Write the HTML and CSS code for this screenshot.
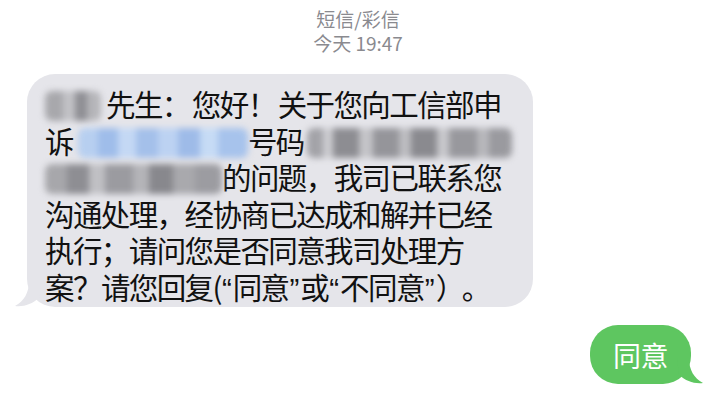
FILE: index.html
```html
<!DOCTYPE html>
<html lang="zh-CN">
<head>
<meta charset="utf-8">
<title>短信/彩信</title>
<link rel="stylesheet" href="styles.css">
</head>
<body>
<div class="screen">
  <header class="meta">
    <div class="meta-line">短信/彩信</div>
    <div class="meta-line">今天 19:47</div>
  </header>

  <div class="row row-in">
    <div class="bubble bubble-in">
      <svg class="tail tail-in" width="26" height="26" viewBox="0 0 26 26"><path d="M14 0 C14 12 9 20 0 25 C9 26 17 23 24 17 L26 0 Z" fill="#e5e5ea"/></svg>
      <p class="msg"><span class="mask mask-name"></span>先生<span class="pw pw-wide">：</span>您好<span class="pw pw-wide">！</span>关于您向工信部申<br>诉<span class="mask mask-link"></span>号码<span class="mask mask-num"></span><br><span class="mask mask-long"></span>的问题<span class="pw">，</span>我司已联系您<br>沟通处理<span class="pw">，</span>经协商已达成和解并已经<br>执行<span class="pw">；</span>请问您是否同意我司处理方<br>案<span class="pw">？</span>请您回复(<span class="q">“</span>同意<span class="q">”</span>或<span class="q">“</span>不同意<span class="q">”</span><span class="pw pw-paren">）</span><span class="pw">。</span></p>
    </div>
  </div>

  <div class="row row-out">
    <div class="bubble bubble-out">
      <svg class="tail tail-out" width="26" height="26" viewBox="0 0 26 26"><path d="M12 0 C12 12 17 20 26 25 C17 26 9 23 2 17 L0 0 Z" fill="#5ec660"/></svg>
      <span class="reply">同意</span>
    </div>
  </div>
</div>
</body>
</html>
```

FILE: styles.css
```css
html, body {
  margin: 0;
  padding: 0;
  background: #ffffff;
}

.screen {
  width: 716px;
  height: 409px;
  overflow: hidden;
  display: flex;
  flex-direction: column;
  font-family: "Noto Sans CJK SC", "Noto Sans", sans-serif;
}

.meta {
  padding-top: 7px;
  display: flex;
  flex-direction: column;
  align-items: center;
  color: #8a8a8f;
  font-size: 19px;
  line-height: 24px;
}

.row {
  display: flex;
}

.row-in {
  padding-left: 27px;
  margin-top: 19px;
}

.row-out {
  justify-content: flex-end;
  padding-right: 25px;
  margin-top: 18px;
}

.bubble {
  position: relative;
}

.bubble-in {
  width: 506px;
  height: 233px;
  box-sizing: border-box;
  background: #e5e5ea;
  border-radius: 28px;
  padding: 11px 0 0 18px;
}

.tail {
  position: absolute;
  bottom: 0;
}

.tail-in {
  left: -12px;
}

.tail-out {
  right: -12px;
}

.msg {
  margin: 0;
  font-size: 29.5px;
  line-height: 36.5px;
  color: #111111;
  white-space: nowrap;
  letter-spacing: -1.6px;
}

.pw {
  display: inline-block;
  width: 28px;
  letter-spacing: 0;
  text-align: left;
}

.pw-wide {
  width: 30px;
}

.pw-paren {
  width: 26px;
  text-align: center;
}

.q {
  font-family: "Liberation Sans", "Noto Sans", sans-serif;
  letter-spacing: 0;
  margin: 0 1px;
}

.mask {
  display: inline-block;
  vertical-align: -5px;
  height: 30px;
  border-radius: 7px;
  filter: blur(3px);
  letter-spacing: 0;
}

.mask-name {
  width: 56px;
  margin-right: 5px;
  background:
    linear-gradient(90deg, #a8a8ac 0 18px, #c2c2c6 18px 30px, #8f8f94 30px 42px, #b5b5b9 42px 56px);
}

.mask-link {
  width: 170px;
  margin-left: 5px;
  background:
    linear-gradient(90deg, #b7cff0 0 20px, #9fbdea 20px 40px, #c4d8f4 40px 58px, #a4c0ea 58px 80px, #bcd2f2 80px 100px, #9ebbe8 100px 122px, #c6dbf5 122px 140px, #a7c3ec 140px 170px);
}

.mask-num {
  width: 205px;
  margin-left: 3px;
  background:
    linear-gradient(90deg, #a3a3a8 0 16px, #cdcdd1 16px 26px, #8d8d92 26px 52px, #c4c4c8 52px 66px, #95959a 66px 92px, #bdbdc1 92px 104px, #8a8a8f 104px 130px, #c8c8cc 130px 142px, #98989d 142px 170px, #b8b8bc 170px 182px, #9a9a9f 182px 205px);
}

.mask-long {
  width: 177px;
  background:
    linear-gradient(90deg, #a7a7ab 0 22px, #8e8e93 22px 44px, #c0c0c4 44px 60px, #9b9ba0 60px 88px, #b4b4b8 88px 104px, #88888d 104px 128px, #a9a9ad 128px 150px, #9c9ca1 150px 177px);
}

.bubble-out {
  background: #5ec660;
  border-radius: 28px;
  height: 59px;
  box-sizing: border-box;
  padding: 0 23px;
  display: flex;
  align-items: center;
}

.reply {
  color: #ffffff;
  font-size: 28px;
  line-height: 36px;
  letter-spacing: -0.5px;
}
```
